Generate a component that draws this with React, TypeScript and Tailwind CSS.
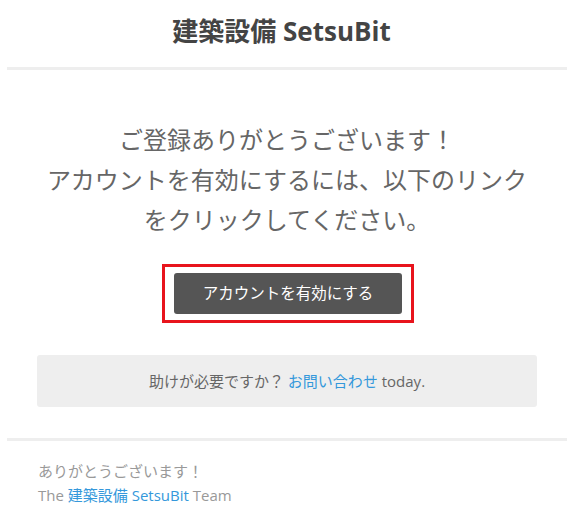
export default function App() {
  return (
    <div
      className="w-[577px] h-[516px] bg-white pl-[7px] pr-[10px] text-[#666]"
      style={{ fontFamily: '"Open Sans", "Noto Sans CJK JP", sans-serif' }}
    >
      <header className="flex h-[67px] items-center justify-center pb-[6px] pr-[11px]">
        <h1 className="text-[26px] font-bold text-[#444] leading-none">建築設備 SetsuBit</h1>
      </header>
      <div className="h-[3px] bg-[#eee]" />

      <main className="px-[30px] pt-[50px]">
        <p className="text-center text-[24px] leading-[40px] text-[#666]">
          ご登録ありがとうございます！
          <br />
          アカウントを有効にするには、以下のリンクをクリックしてください。
        </p>

        <div className="mt-[24px] flex justify-center">
          <div className="ml-[2px] border-[3px] border-[#e8141c] px-[9px] py-[6px]">
            <a className="flex h-[41px] w-[228px] items-center justify-center rounded-[3px] bg-[#555] text-[15.5px] text-white">
              アカウントを有効にする
            </a>
          </div>
        </div>

        <div className="mt-[32px] flex h-[52px] items-center justify-center rounded-[3px] bg-[#eee] text-[15px] text-[#666]">
          助けが必要ですか？&nbsp;<a className="text-[#3498db]">お問い合わせ</a>&nbsp;today.
        </div>
      </main>

      <div className="mt-[31px] h-[3px] bg-[#eee]" />

      <footer className="px-[31px] pt-[18px] text-[15px] leading-[24px] text-[#999]">
        <p>ありがとうございます！</p>
        <p>
          The <a className="text-[#3498db]">建築設備 SetsuBit</a> Team
        </p>
      </footer>
    </div>
  )
}
